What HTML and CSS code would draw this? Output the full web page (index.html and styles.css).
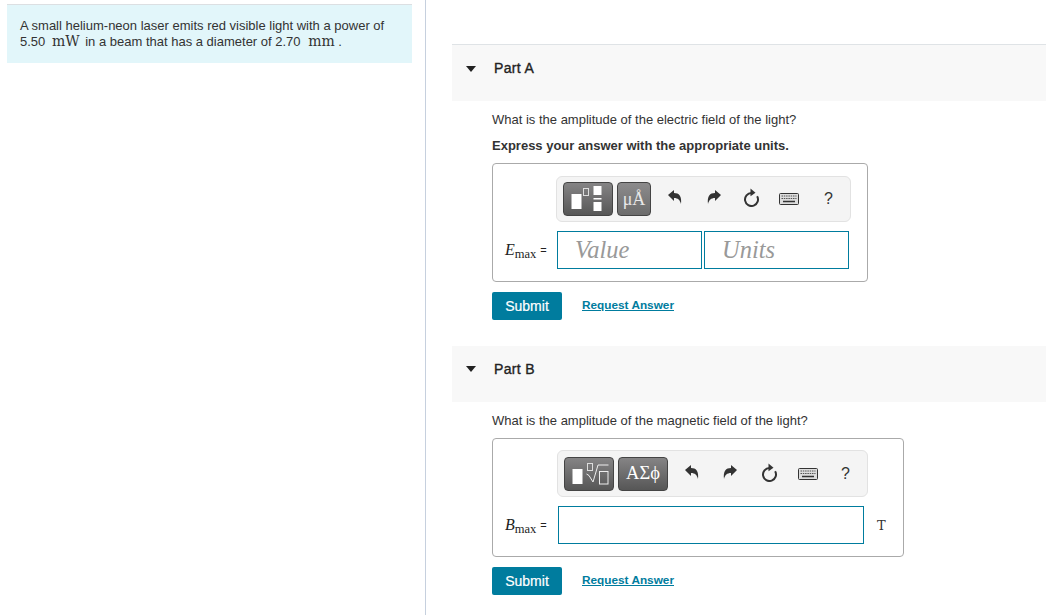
FILE: index.html
```html
<!DOCTYPE html>
<html lang="en">
<head>
<meta charset="utf-8">
<title>Laser problem</title>
<link rel="stylesheet" href="styles.css">
</head>
<body>
<aside class="left">
  <div class="intro">
    <p>A small helium-neon laser emits red visible light with a power of<br>5.50 <span class="unit unit-w">mW</span> in a beam that has a diameter of 2.70 <span class="unit unit-m">mm</span> .</p>
  </div>
</aside>
<main class="right">
  <section class="part part-a">
    <header class="part-head">
      <svg class="caret" width="10" height="6" viewBox="0 0 10 6"><path d="M0 0h10L5 6z" fill="#222"/></svg>
      <h2>Part A</h2>
    </header>
    <div class="part-body">
      <p class="question q-a">What is the amplitude of the electric field of the light?</p>
      <p class="hint">Express your answer with the appropriate units.</p>
      <div class="answer answer-a">
        <div class="toolbar toolbar-a">
          <button class="tool tool-wide" type="button" aria-label="Templates">
            <svg width="38" height="26" viewBox="0 0 38 26"><rect x="2.500" y="8" width="10" height="15" fill="#fff"/><rect x="14.500" y="2.500" width="5" height="7" fill="none" stroke="#ddd"/><rect x="24.500" y="0" width="8" height="9" fill="#fff"/><rect x="24.500" y="12" width="8" height="1.500" fill="#fff"/><rect x="24.500" y="16" width="8" height="9" fill="#fff"/></svg>
          </button>
          <button class="tool tool-units" type="button">μÅ</button>
          <span class="actions actions-a">
            <svg class="act act-up" width="14" height="15" viewBox="0 0 14 15"><path d="M0 5 6 0v3c5 0 8 3 7 11-1-4-3-6-7-6v3z" fill="#333"/></svg>
            <svg class="act act-up" width="14" height="15" viewBox="0 0 14 15"><path d="M14 5 8 0v3C3 3 0 6 1 14c1-4 3-6 7-6v3z" fill="#333"/></svg>
            <svg class="act act-up" width="17" height="19" viewBox="0 0 17 19"><path d="M8.500 5a6.500 6.500 0 1 0 5.600 3.200" fill="none" stroke="#333" stroke-width="2"/><path d="M7.500 .5l5 4.300-5 3.500z" fill="#333"/></svg>
            <svg class="act" width="20" height="12" viewBox="0 0 20 12"><rect x=".5" y=".5" width="19" height="11" rx="1" fill="#ddd" stroke="#333"/><path d="M2.500 3h15M2.500 5.500h15" stroke="#555" stroke-dasharray="1.500 .8"/><path d="M4 8.500h12" stroke="#333" stroke-width="1.500"/></svg>
            <span class="help">?</span>
          </span>
        </div>
        <div class="entry">
          <span class="var var-a"><i>E</i><sub>max</sub><span class="eq">=</span></span>
          <input class="field field-value" type="text" placeholder="Value">
          <input class="field field-units" type="text" placeholder="Units">
        </div>
      </div>
      <div class="submit-row">
        <button class="submit" type="button">Submit</button>
        <a class="reveal" href="#">Request Answer</a>
      </div>
    </div>
  </section>
  <section class="part part-b">
    <header class="part-head">
      <svg class="caret" width="10" height="6" viewBox="0 0 10 6"><path d="M0 0h10L5 6z" fill="#222"/></svg>
      <h2>Part B</h2>
    </header>
    <div class="part-body">
      <p class="question q-b">What is the amplitude of the magnetic field of the light?</p>
      <div class="answer answer-b">
        <div class="toolbar toolbar-b">
          <button class="tool tool-wide" type="button" aria-label="Templates">
            <svg width="40" height="28" viewBox="0 0 40 28"><rect x="3.500" y="9" width="10" height="15" fill="#fff"/><rect x="18.500" y="3.500" width="5" height="7" fill="none" stroke="#ddd"/><path d="M17.500 14l2.500 1.500 4 6.500 5-17h10.500" fill="none" stroke="#eee"/><rect x="30.500" y="11.500" width="8.500" height="12.500" fill="none" stroke="#eee"/></svg>
          </button>
          <button class="tool tool-greek" type="button">ΑΣϕ</button>
          <span class="actions actions-b">
            <svg class="act act-up" width="14" height="15" viewBox="0 0 14 15"><path d="M0 5 6 0v3c5 0 8 3 7 11-1-4-3-6-7-6v3z" fill="#333"/></svg>
            <svg class="act act-up" width="14" height="15" viewBox="0 0 14 15"><path d="M14 5 8 0v3C3 3 0 6 1 14c1-4 3-6 7-6v3z" fill="#333"/></svg>
            <svg class="act act-up" width="17" height="19" viewBox="0 0 17 19"><path d="M8.500 5a6.500 6.500 0 1 0 5.600 3.200" fill="none" stroke="#333" stroke-width="2"/><path d="M7.500 .5l5 4.300-5 3.500z" fill="#333"/></svg>
            <svg class="act" width="20" height="12" viewBox="0 0 20 12"><rect x=".5" y=".5" width="19" height="11" rx="1" fill="#ddd" stroke="#333"/><path d="M2.500 3h15M2.500 5.500h15" stroke="#555" stroke-dasharray="1.500 .8"/><path d="M4 8.500h12" stroke="#333" stroke-width="1.500"/></svg>
            <span class="help">?</span>
          </span>
        </div>
        <div class="entry">
          <span class="var var-b"><i>B</i><sub>max</sub><span class="eq">=</span></span>
          <input class="field field-full" type="text">
          <span class="fixed-unit">T</span>
        </div>
      </div>
      <div class="submit-row submit-row-b">
        <button class="submit" type="button">Submit</button>
        <a class="reveal" href="#">Request Answer</a>
      </div>
    </div>
  </section>
</main>
</body>
</html>
```

FILE: styles.css
```css
* { box-sizing: border-box; }
html, body { height: 100%; }
body {
  margin: 0;
  height: 615px;
  overflow: hidden;
  display: flex;
  background: #fff;
  color: #333;
  font-family: "Liberation Sans", Arial, sans-serif;
  font-size: 13px;
}
p, h2 { margin: 0; }

.left {
  width: 426px;
  flex: none;
  padding: 4px 13px 0 7px;
  border-right: 1px solid #c6d0de;
}
.intro {
  height: 59px;
  padding: 13px 12px 0 13px;
  background: #e2f6fa;
  border-top: 1px solid #dcdfe2;
  font-size: 13px;
  line-height: 16px;
  color: #333;
}
.unit {
  font-family: "DejaVu Serif", serif;
  font-size: 14px;
  line-height: 0;
}
.unit-w { margin: 0 2px 0 3px; }
.unit-m { margin: 0 0 0 4px; }

.right { flex: 1; padding: 44px 0 0 26px; min-width: 0; }
.part-head {
  display: flex;
  align-items: flex-start;
  height: 57px;
  padding: 15px 0 0 14px;
  background: #f8f8f8;
  border-top: 1px solid #dfe3e6;
}
.part-a .caret { margin-top: 6px; }
.part-b .part-head { height: 56px; border-top: 0; padding-top: 15px; }
.caret { margin-top: 5px; flex: none; }
.part-head h2 {
  margin-left: 18px;
  font-size: 14px;
  line-height: 16px;
  font-weight: 400;
  letter-spacing: .35px;
  -webkit-text-stroke: .35px #222;
  color: #222;
}
.part-body { padding-left: 40px; }
.question { font-size: 13px; line-height: 16px; color: #333; }
.q-a { padding-top: 11px; }
.q-b { padding-top: 11px; }
.hint { margin-top: 10px; font-size: 13px; line-height: 16px; font-weight: 700; color: #333; }

.answer {
  border: 1px solid #aaa;
  border-radius: 4px;
  height: 119px;
  padding-top: 12px;
}
.answer-a { width: 376px; margin-top: 9px; }
.answer-b { width: 412px; margin-top: 9px; padding-top: 11px; }

.toolbar {
  display: flex;
  align-items: center;
  height: 46px;
  padding-left: 6px;
  background: #f4f4f4;
  border: 1px solid #e2e2e2;
  border-radius: 6px;
}
.toolbar-a { width: 295px; margin-left: 63px; }
.toolbar-b { width: 311px; margin-left: 64px; height: 47px; }

.tool {
  display: flex;
  align-items: center;
  justify-content: center;
  height: 34px;
  padding: 0;
  border: 1px solid #444;
  border-radius: 4px;
  background: linear-gradient(#858485, #565656);
  color: #fff;
  font-family: "Liberation Serif", serif;
  font-size: 16px;
}
.tool-wide { width: 50px; margin-right: 4px; }
.tool-units { width: 34px; background: linear-gradient(#8c8b8c, #6c6c6c); color: #e8e8e8; font-size: 18px; }
.tool-greek { width: 50px; font-size: 18.500px; }

.actions { display: flex; align-items: center; flex: 1; }
.actions-a { padding-left: 17px; }
.actions-b { padding-left: 17px; }
.act-up { margin-bottom: 3px; }
.actions-a .act:nth-child(1) { margin-right: 25px; }
.actions-a .act:nth-child(2) { margin-right: 22px; }
.actions-a .act:nth-child(3) { margin-right: 19px; }
.actions-a .act:nth-child(4) { margin-right: 25px; }
.actions-b .act:nth-child(1) { margin-right: 24px; }
.actions-b .act:nth-child(2) { margin-right: 24px; }
.actions-b .act:nth-child(3) { margin-right: 20px; }
.actions-b .act:nth-child(4) { margin-right: 23px; }
.help { font-size: 16px; color: #333; }

.entry { display: flex; align-items: center; margin-top: 9px; height: 38px; }
.var {
  width: 64px;
  padding-left: 12px;
  flex: none;
  white-space: nowrap;
  font-family: "Liberation Serif", serif;
  font-size: 16px;
  color: #222;
}
.var sub { font-size: 12.500px; vertical-align: -3px; line-height: 0; }
.eq { font-family: "Liberation Sans", sans-serif; font-size: 11px; margin-left: 4px; position: relative; top: -1px; }
.var-b { width: 65px; }

.field {
  height: 38px;
  border: 1px solid #007c9e;
  border-radius: 0;
  background: #fff;
  padding: 0 0 0 17px;
  font-family: "Liberation Serif", serif;
  font-style: italic;
  font-size: 24.500px;
  outline: 0;
}
.field::placeholder { color: #999; opacity: 1; }
.field-value { width: 145px; margin-right: 2px; }
.field-units { width: 145px; }
.field-full { width: 306px; }
.fixed-unit {
  margin-left: 13px;
  font-family: "DejaVu Serif", serif;
  font-size: 13px;
  color: #333;
}

.submit-row { display: flex; align-items: center; gap: 20px; margin-top: 10px; height: 28px; }
.submit {
  width: 70px;
  height: 28px;
  padding: 0;
  border: 0;
  border-radius: 2px;
  background: #007c9e;
  color: #fff;
  font-family: "Liberation Sans", sans-serif;
  font-size: 14px;
  -webkit-text-stroke: .2px #fff;
}
.reveal {
  color: #007c9e;
  font-size: 11.800px;
  line-height: 14px;
  margin-top: -2px;
  font-weight: 700;
  text-decoration: underline;
}
.part-a { height: 302px; }
```
